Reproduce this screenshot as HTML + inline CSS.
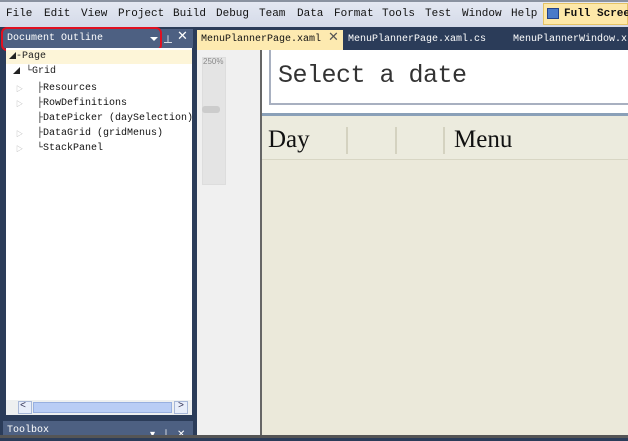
<!DOCTYPE html>
<html><head><style>
*{margin:0;padding:0;box-sizing:border-box}
body{width:628px;height:438px;overflow:hidden;background:#2b3c59;font-family:"Liberation Mono","Noto Sans CJK SC",monospace;position:relative}
.a{position:absolute}
.menu{left:0;top:0;width:628px;height:27px;background:linear-gradient(#e4e8f2,#d4dae8);border-top:2px solid #8a92a0;font-size:11px;color:#111;white-space:nowrap}
.menu span{position:absolute;top:6px}
.t{font-size:10px;white-space:nowrap}
.tri{font-size:7px;color:#aaa}
</style></head><body>
<div class="a menu">
<span style="left:6px">File</span><span style="left:44px">Edit</span><span style="left:81px">View</span><span style="left:118px">Project</span><span style="left:173px">Build</span><span style="left:216px">Debug</span><span style="left:259px">Team</span><span style="left:297px">Data</span><span style="left:334px">Format</span><span style="left:382px">Tools</span><span style="left:425px">Test</span><span style="left:462px">Window</span><span style="left:511px">Help</span>
<div class="a" style="left:543px;top:1px;width:85px;height:22px;background:#fde8a8;border:1px solid #e5c365"></div>
<div class="a" style="left:547px;top:6px;width:12px;height:11px;background:#4a7ac8;border:1px solid #23428a"></div>
<span style="left:564px;font-weight:bold">Full Scree</span>
</div>
<div class="a" style="left:3px;top:29px;width:190px;height:19px;background:#4d6082"></div>
<div class="a t" style="left:7px;top:33px;color:#fff">Document Outline</div>
<div class="a" style="left:150px;top:37px;border-left:4px solid transparent;border-right:4px solid transparent;border-top:4px solid #fff"></div>
<div class="a t" style="left:163px;top:31px;color:#fff">⊥</div>
<div class="a" style="left:177px;top:29px;color:#fff;font-size:13px">✕</div>
<div class="a" style="left:1px;top:27px;width:161px;height:24px;border:2px solid #e01020;border-radius:6px"></div>
<div class="a" style="left:6px;top:48px;width:186px;height:366px;background:#fff"></div>
<div class="a" style="left:6px;top:50px;width:186px;height:14px;background:#fdf5d8"></div>
<div class="a t" style="left:9px;top:51px;color:#222"><span style="font-size:7px">◢</span>-Page</div>
<div class="a t" style="left:13px;top:66px;color:#222"><span style="font-size:7px">◢</span> └Grid</div>
<div class="a tri" style="left:16px;top:84px">▷</div>
<div class="a tri" style="left:16px;top:99px">▷</div>
<div class="a tri" style="left:16px;top:129px">▷</div>
<div class="a tri" style="left:16px;top:144px">▷</div>
<div class="a t" style="left:37px;top:81px;color:#111;line-height:15px">├Resources<br>├RowDefinitions<br>├DatePicker (daySelection)<br>├DataGrid (gridMenus)<br>└StackPanel</div>
<div class="a" style="left:6px;top:400px;width:186px;height:15px;background:#eef0f0"></div>
<div class="a" style="left:18px;top:401px;width:14px;height:13px;background:#e8eefa;border:1px solid #a8b8d8"></div>
<div class="a" style="left:33px;top:402px;width:139px;height:11px;background:#b9cdf5;border:1px solid #98b0e0"></div>
<div class="a" style="left:174px;top:401px;width:14px;height:13px;background:#e8eefa;border:1px solid #a8b8d8"></div>
<div class="a t" style="left:20px;top:401px;color:#335">&lt;</div><div class="a t" style="left:178px;top:401px;color:#335">&gt;</div>
<div class="a" style="left:3px;top:421px;width:190px;height:17px;background:#4d6082"></div>
<div class="a t" style="left:7px;top:425px;color:#fff">Toolbox</div>
<div class="a t" style="left:150px;top:425px;color:#fff">▾ ⊥ ✕</div>
<div class="a" style="left:197px;top:30px;width:146px;height:20px;background:#fdeab0"></div>
<div class="a t" style="left:201px;top:34px;color:#111">MenuPlannerPage.xaml</div>
<div class="a" style="left:328px;top:30px;color:#555;font-size:13px">✕</div>
<div class="a t" style="left:348px;top:34px;color:#fff">MenuPlannerPage.xaml.cs</div>
<div class="a t" style="left:513px;top:34px;color:#fff">MenuPlannerWindow.x</div>
<div class="a" style="left:197px;top:50px;width:431px;height:386px;background:#f0f0f0"></div>
<div class="a" style="left:202px;top:57px;width:24px;height:128px;background:#e4e4e4;border:1px solid #ddd"></div>
<div class="a" style="left:203px;top:57px;font-size:8px;color:#888;font-family:'Liberation Sans',sans-serif">250%</div>
<div class="a" style="left:202px;top:106px;width:18px;height:7px;background:#ccc;border-radius:3px"></div>
<div class="a" style="left:260px;top:50px;width:368px;height:386px;background:#ebe9da;border-left:2px solid #666"></div>
<div class="a" style="left:262px;top:50px;width:366px;height:63px;background:#fff"></div>
<div class="a" style="left:269px;top:50px;width:359px;height:55px;border-left:2px solid #a8b0c0;border-bottom:2px solid #a8b0c0"></div>
<div class="a" style="left:278px;top:61px;font-size:25px;letter-spacing:-0.5px;color:#333;font-family:'Liberation Mono',monospace">Select a date</div>
<div class="a" style="left:262px;top:113px;width:366px;height:3px;background:#8aa0b8"></div>
<div class="a" style="left:262px;top:116px;width:366px;height:44px;background:#ecebde;border-bottom:1px solid #d8d6c4"></div>
<div class="a" style="left:268px;top:126px;font-size:25px;color:#111;font-family:'Liberation Serif',serif">Day</div>
<div class="a" style="left:346px;top:127px;width:2px;height:27px;background:#d4d2c0"></div>
<div class="a" style="left:395px;top:127px;width:2px;height:27px;background:#d4d2c0"></div>
<div class="a" style="left:443px;top:127px;width:2px;height:27px;background:#d4d2c0"></div>
<div class="a" style="left:454px;top:126px;font-size:25px;color:#111;font-family:'Liberation Serif',serif">Menu</div>
<div class="a" style="left:0;top:435px;width:628px;height:3px;background:#555"></div>
</body></html>
